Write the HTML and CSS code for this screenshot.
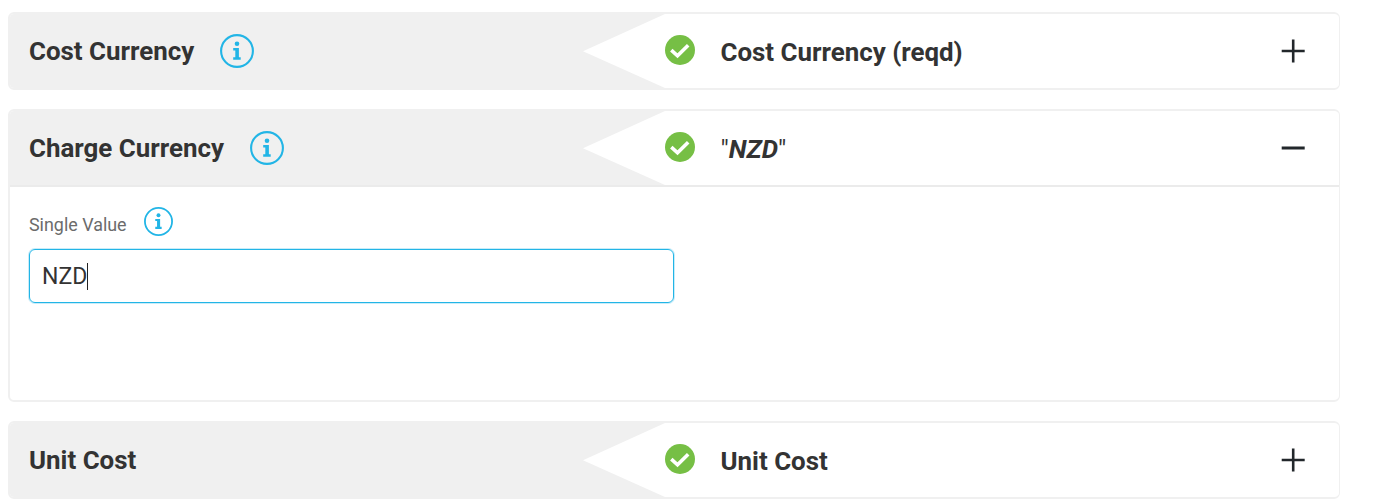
FILE: index.html
```html
<!DOCTYPE html>
<html lang="en">
<head>
    <meta charset="UTF-8">
    <meta name="viewport" content="width=device-width, initial-scale=1.0">
    <title>Field Mapping</title>
    <link rel="stylesheet" href="styles.css">
</head>
<body>
    <svg class="sprite">
        <symbol id="icon-info" viewBox="0 0 34 34">
            <circle cx="17" cy="17" r="15.9" fill="none" stroke="currentColor" stroke-width="2.1"/>
            <circle cx="17" cy="9.7" r="2.3" fill="currentColor"/>
            <path d="M13.2 14h5.7v9.3h1.8v2.5h-7.5v-2.5h2.1v-6.8h-2.1z" fill="currentColor"/>
        </symbol>
        <symbol id="icon-check" viewBox="0 0 30 30">
            <circle cx="15" cy="15" r="15" fill="#76bf45"/>
            <path d="M6.3 15.2L12.5 20.8L23.2 10.2" fill="none" stroke="#fff" stroke-width="3.6"/>
        </symbol>
        <symbol id="icon-plus" viewBox="0 0 24 24">
            <path d="M.7 12h23M12.2 .5v23" stroke="#22272b" stroke-width="2.6"/>
        </symbol>
        <symbol id="icon-minus" viewBox="0 0 24 24">
            <path d="M.7 12h23" stroke="#22272b" stroke-width="3"/>
        </symbol>
    </svg>

    <div class="panel">
        <div class="panel-header">
            <div class="source">
                <span class="title">Cost Currency</span>
                <svg class="info"><use href="#icon-info"/></svg>
            </div>
            <svg class="arrow" viewBox="0 0 82 74" preserveAspectRatio="none"><path d="M82 0L0 37.3L82 74z" fill="#fff"/></svg>
            <div class="target">
                <svg class="check"><use href="#icon-check"/></svg>
                <span class="value">Cost Currency (reqd)</span>
                <svg class="toggle"><use href="#icon-plus"/></svg>
            </div>
        </div>
    </div>

    <div class="panel open">
        <div class="panel-header">
            <div class="source">
                <span class="title">Charge Currency</span>
                <svg class="info"><use href="#icon-info"/></svg>
            </div>
            <svg class="arrow" viewBox="0 0 82 74" preserveAspectRatio="none"><path d="M82 0L0 37.3L82 74z" fill="#fff"/></svg>
            <div class="target">
                <svg class="check"><use href="#icon-check"/></svg>
                <span class="value literal">"<em>NZD</em>"</span>
                <svg class="toggle"><use href="#icon-minus"/></svg>
            </div>
        </div>
        <div class="panel-body">
            <div class="label-row">
                <span class="label">Single Value</span>
                <svg class="info small"><use href="#icon-info"/></svg>
            </div>
            <div class="text-input" role="textbox" contenteditable="true">NZD<span class="caret"></span></div>
        </div>
    </div>

    <div class="panel">
        <div class="panel-header">
            <div class="source">
                <span class="title">Unit Cost</span>
            </div>
            <svg class="arrow" viewBox="0 0 82 74" preserveAspectRatio="none"><path d="M82 0L0 37.3L82 74z" fill="#fff"/></svg>
            <div class="target">
                <svg class="check"><use href="#icon-check"/></svg>
                <span class="value">Unit Cost</span>
                <svg class="toggle"><use href="#icon-plus"/></svg>
            </div>
        </div>
    </div>
</body>
</html>
```
FILE: styles.css
```css
* {
    box-sizing: border-box;
}
body {
    margin: 0;
    padding: 12px 39px 0 8px;
    height: 504px;
    overflow: hidden;
    font-family: Roboto, sans-serif;
    color: #333;
    background: #fff;
}
.sprite {
    display: none;
}
.panel {
    width: 1332px;
    height: 78px;
    margin-bottom: 19px;
    border: 2px solid #f0f0f0;
    border-right-width: 1px;
    border-radius: 6px;
    overflow: hidden;
}
.panel.open {
    height: 293px;
}
.panel-header {
    display: flex;
    height: 74px;
    background: #f0f0f0;
}
.source {
    display: flex;
    align-items: center;
    width: 573px;
    padding: 0 0 1px 19px;
}
.title,
.value {
    font-size: 25.9px;
    font-weight: 700;
    line-height: 30px;
    white-space: nowrap;
}
.info {
    width: 34px;
    height: 34px;
    margin-left: 26px;
    color: #22b5e6;
}
.arrow {
    width: 82px;
    height: 74px;
}
.target {
    flex: 1;
    display: flex;
    align-items: center;
    background: #fff;
}
.check {
    width: 30px;
    height: 30px;
    margin: 0 0 2px -0.5px;
}
.value {
    flex: 1;
    margin-left: 26px;
    padding-top: 1px;
}
.literal {
    font-weight: 400;
}
.literal em {
    font-weight: 700;
}
.toggle {
    width: 24px;
    height: 24px;
    margin-right: 34px;
}
.panel-body {
    border-top: 2px solid #ebebeb;
    padding: 20px 19px;
}
.label-row {
    display: flex;
    align-items: center;
    height: 29px;
}
.label {
    padding-top: 5px;
    font-size: 17.9px;
    color: #6b6b6b;
}
.info.small {
    width: 29px;
    height: 29px;
    margin-left: 17px;
}
.text-input {
    display: flex;
    align-items: center;
    width: 645px;
    height: 54px;
    margin-top: 13px;
    padding-left: 12px;
    border: 1px solid #22b5e6;
    border-radius: 6px;
    box-shadow: 0 0 0 1px rgba(34, 181, 230, 0.25);
    font-size: 23px;
    outline: none;
}
.caret {
    width: 1px;
    height: 27px;
    background: #222;
}
```
